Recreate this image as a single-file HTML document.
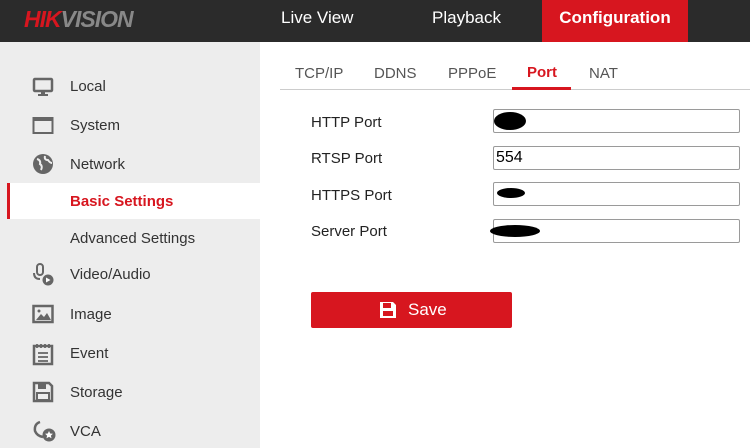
<!DOCTYPE html>
<html><head><style>
body{margin:0;width:750px;height:448px;overflow:hidden;font-family:"Liberation Sans",Arial,sans-serif;background:#fff;position:relative}
.hdr{position:absolute;left:0;top:0;width:750px;height:42px;background:#2b2b2b}
.logo{position:absolute;left:24px;top:6px;font-size:23px;font-weight:bold;font-style:italic;letter-spacing:-1px}
.nav{position:absolute;top:8px;font-size:17px;color:#fff}
.cfg{position:absolute;left:542px;top:0;width:146px;height:42px;background:#d7161f;color:#fff;font-weight:bold;font-size:17px;text-align:center;line-height:35px}
.side{position:absolute;left:0;top:42px;width:260px;height:406px;background:#ededed}
.it{position:absolute;left:70px;font-size:15px;color:#333}
.ic{position:absolute;left:32px}
.sel{position:absolute;left:7px;top:183px;width:253px;height:36px;background:#fff;border-left:3px solid #d7161f}
.tab{position:absolute;top:65px;font-size:15px;color:#555}
.lbl{position:absolute;left:311px;font-size:15px;color:#222}
.inp{position:absolute;left:493px;width:247px;height:24px;box-sizing:border-box;border:1px solid #9a9a9a;border-radius:2px;font-size:16px;line-height:22px;padding-left:2px}
.blob{position:absolute;background:#000;border-radius:50%}
</style></head><body>
<div class="hdr">
<div class="logo"><span style="color:#d7161f">HIK</span><span style="color:#888">VISION</span></div>
<div class="nav" style="left:281px">Live View</div>
<div class="nav" style="left:432px">Playback</div>
<div class="cfg">Configuration</div>
</div>
<div class="side">
<div class="sel" style="top:141px"></div>
</div>
<svg class="ic" style="top:77px" width="22" height="20" viewBox="0 0 22 20"><rect x="2" y="2" width="18" height="12" rx="1" fill="none" stroke="#666" stroke-width="2.5"/><rect x="9" y="14" width="4" height="3" fill="#666"/><rect x="6" y="17" width="10" height="2" fill="#666"/></svg>
<svg class="ic" style="top:116px" width="22" height="20" viewBox="0 0 22 20"><rect x="1.5" y="2" width="19" height="15" fill="none" stroke="#666" stroke-width="2"/><rect x="1.5" y="2" width="19" height="3" fill="#666"/></svg>
<svg class="ic" style="top:153px" width="22" height="22" viewBox="0 0 22 22"><circle cx="11" cy="11" r="10" fill="#666"/><path d="M5 6 q4 1 3 5 q3 2 1 6 M13 3 q-1 4 3 4 q2 3 4 3" stroke="#ededed" stroke-width="2" fill="none"/></svg>
<svg class="ic" style="top:263px" width="24" height="24" viewBox="0 0 24 24"><rect x="5" y="1" width="6" height="11" rx="3" fill="none" stroke="#666" stroke-width="2"/><path d="M2 10 q0 6 6 6" stroke="#666" stroke-width="2" fill="none"/><circle cx="16" cy="17" r="5.5" fill="#666"/><path d="M14 14.5 l4.5 2.5 l-4.5 2.5z" fill="#fff"/></svg>
<svg class="ic" style="top:304px" width="22" height="20" viewBox="0 0 22 20"><rect x="1.5" y="2" width="19" height="16" fill="none" stroke="#666" stroke-width="2.5"/><path d="M4 16 l5-6 l3 3 l3-4 l4 7z" fill="#666"/><circle cx="7" cy="7" r="1.5" fill="#666"/></svg>
<svg class="ic" style="top:342px" width="22" height="24" viewBox="0 0 22 24"><rect x="2" y="4" width="18" height="18" fill="none" stroke="#666" stroke-width="2.5"/><path d="M5 2v4M9 2v4M13 2v4M17 2v4M6 11h10M6 15h10M6 19h10" stroke="#666" stroke-width="1.8"/></svg>
<svg class="ic" style="top:381px" width="22" height="22" viewBox="0 0 22 22"><path d="M2 2h15l3 3v15H2z" fill="none" stroke="#666" stroke-width="2.5"/><rect x="6" y="3" width="8" height="5" fill="#666"/><rect x="5" y="12" width="12" height="7" fill="none" stroke="#666" stroke-width="2"/></svg>
<svg class="ic" style="top:420px" width="26" height="24" viewBox="0 0 26 24"><path d="M8 2 q-6 2 -5 9 q2 5 8 6" stroke="#666" stroke-width="2.5" fill="none"/><circle cx="17" cy="15" r="6.5" fill="#666"/><path d="M17 11 l1.2 2.5 2.7.3-2 1.8.6 2.7-2.5-1.4-2.5 1.4.6-2.7-2-1.8 2.7-.3z" fill="#fff"/></svg>
<div class="it" style="top:78px">Local</div>
<div class="it" style="top:117px">System</div>
<div class="it" style="top:156px">Network</div>
<div class="it" style="top:193px;color:#d7161f;font-weight:bold">Basic Settings</div>
<div class="it" style="top:230px">Advanced Settings</div>
<div class="it" style="top:266px">Video/Audio</div>
<div class="it" style="top:306px">Image</div>
<div class="it" style="top:345px">Event</div>
<div class="it" style="top:384px">Storage</div>
<div class="it" style="top:423px">VCA</div>

<div class="tab" style="left:295px">TCP/IP</div>
<div class="tab" style="left:374px">DDNS</div>
<div class="tab" style="left:448px">PPPoE</div>
<div class="tab" style="left:527px;color:#d7161f;font-weight:bold;top:64px">Port</div>
<div class="tab" style="left:589px">NAT</div>
<div style="position:absolute;left:280px;top:89px;width:470px;height:1px;background:#ccc"></div>
<div style="position:absolute;left:512px;top:87px;width:59px;height:3px;background:#d7161f"></div>

<div class="lbl" style="top:114px">HTTP Port</div>
<div class="lbl" style="top:150px">RTSP Port</div>
<div class="lbl" style="top:187px">HTTPS Port</div>
<div class="lbl" style="top:223px">Server Port</div>
<div class="inp" style="top:109px"></div>
<div class="inp" style="top:146px">554</div>
<div class="inp" style="top:182px"></div>
<div class="inp" style="top:219px"></div>
<div class="blob" style="left:494px;top:112px;width:32px;height:18px"></div>
<div class="blob" style="left:497px;top:188px;width:28px;height:10px"></div>
<div class="blob" style="left:490px;top:225px;width:50px;height:12px"></div>

<div style="position:absolute;left:311px;top:292px;width:201px;height:36px;background:#d7161f;border-radius:2px;color:#fff;font-size:17px;line-height:36px">
<svg style="position:absolute;left:68px;top:9px" width="18" height="18" viewBox="0 0 18 18"><path d="M1 1h13l3 3v13H1z" fill="#fff"/><rect x="4" y="2" width="8" height="5" fill="#d7161f"/><rect x="4" y="10" width="10" height="5" fill="#d7161f"/></svg>
<span style="position:absolute;left:97px">Save</span></div>
</body></html>
